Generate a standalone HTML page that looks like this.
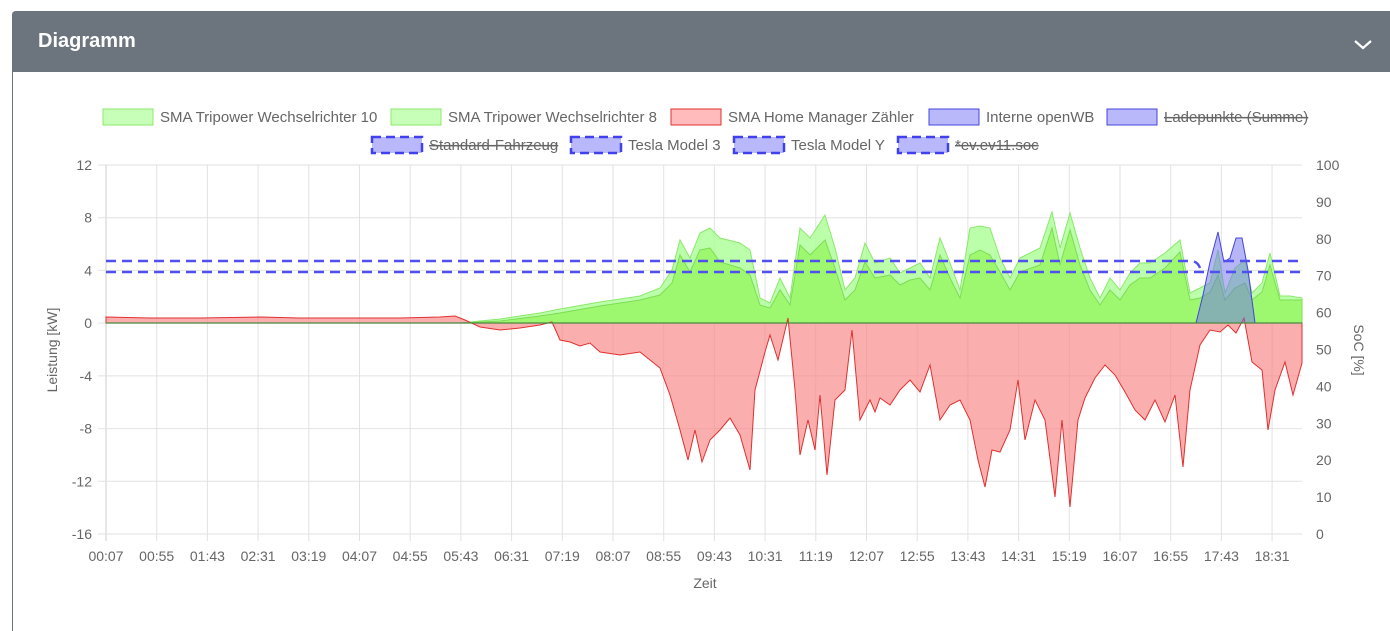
<!DOCTYPE html>
<html><head><meta charset="utf-8">
<style>
body{margin:0;width:1390px;height:612px;background:#fff;overflow:hidden;font-family:"Liberation Sans",sans-serif;}
#panel{position:absolute;left:12px;top:11px;width:1390px;height:620px;border-left:1px solid #6c757d;border-top-left-radius:4px;}
#hdr{position:absolute;left:12px;top:11px;width:1378px;height:61px;background:#6c757d;border-top-left-radius:4px;}
#hdr .t{position:absolute;left:26px;top:19px;color:#fff;font-weight:bold;font-size:20px;}
svg{position:absolute;left:0;top:0}
</style></head><body>
<div id="panel"></div>
<div id="hdr"><div class="t">Diagramm</div>
<svg style="left:1340px;top:22px" width="24" height="24"><path d="M3 8 L11 15 L19 8" fill="none" stroke="#fff" stroke-width="2.2"/></svg>
</div>
<svg id="c" width="1390" height="612" style="top:0;left:0" font-family="Liberation Sans, sans-serif">
<g id="grid"></g>
<path fill="rgba(170,255,150,0.8)" stroke="#8be86a" stroke-width="1" d="M460 323 L500 319 L540 313 L560 309 L600 302 L640 296 L660 288 L672 270 L680 240 L690 258 L700 233 L710 228 L720 238 L740 243 L750 250 L760 298 L770 303 L780 278 L790 298 L800 228 L810 238 L825 215 L835 248 L845 290 L855 278 L865 243 L875 263 L890 258 L900 273 L910 268 L920 263 L930 278 L940 238 L950 263 L960 290 L970 228 L980 226 L990 228 L1000 258 L1010 278 L1020 258 L1040 248 L1052 212 L1060 248 L1070 213 L1080 248 L1090 278 L1100 298 L1110 278 L1120 290 L1130 273 L1140 263 L1150 263 L1165 253 L1180 240 L1190 293 L1200 288 L1210 283 L1218 250 L1225 293 L1235 268 L1245 260 L1252 293 L1262 283 L1270 253 L1280 296 L1290 296 L1302 298 L1302 323 Z"/>
<path fill="#9ef86f" stroke="#7ddc55" stroke-width="1" d="M460 323 L500 321 L540 316 L560 313 L600 306 L640 300 L660 295 L672 283 L680 255 L690 272 L700 250 L710 248 L720 262 L740 268 L750 275 L760 305 L770 308 L780 290 L790 305 L800 245 L810 255 L825 240 L835 268 L845 300 L855 290 L865 262 L875 278 L890 275 L900 285 L910 280 L920 278 L930 290 L940 255 L950 278 L960 298 L970 255 L980 250 L990 255 L1000 272 L1010 290 L1020 272 L1040 265 L1052 228 L1060 265 L1070 230 L1080 265 L1090 290 L1100 305 L1110 290 L1120 300 L1130 285 L1140 278 L1150 278 L1165 268 L1180 252 L1190 300 L1200 298 L1210 292 L1218 275 L1225 300 L1235 288 L1245 283 L1252 300 L1262 292 L1270 265 L1280 300 L1290 300 L1302 300 L1302 323 Z"/>
<path fill="rgba(250,140,140,0.7)" stroke="#e03030" stroke-width="1" d="M106 317 L150 318 L200 318 L260 317 L300 318 L350 318 L400 318 L440 317 L455 316 L465 320 L480 327 L500 330 L520 328 L540 325 L552 322 L560 340 L570 342 L580 346 L590 343 L600 352 L620 355 L640 352 L660 368 L670 395 L680 430 L688 460 L695 430 L702 462 L710 440 L720 430 L730 418 L740 435 L750 470 L755 390 L765 352 L770 335 L778 360 L788 318 L795 390 L800 455 L808 420 L815 450 L820 395 L827 475 L835 400 L845 390 L852 330 L860 420 L870 400 L875 412 L880 398 L890 405 L900 390 L910 380 L920 392 L930 365 L940 420 L950 405 L960 400 L970 420 L978 460 L985 487 L992 450 L1000 452 L1010 430 L1018 380 L1025 440 L1035 400 L1045 420 L1055 497 L1062 420 L1070 507 L1078 420 L1085 398 L1095 378 L1105 365 L1115 375 L1125 392 L1135 410 L1145 420 L1155 400 L1165 422 L1175 395 L1183 467 L1190 390 L1200 345 L1210 330 L1220 332 L1228 325 L1236 333 L1244 318 L1252 362 L1262 370 L1268 430 L1275 390 L1285 362 L1293 395 L1302 363 L1302 323 L106 323 Z"/>
<path fill="rgba(110,110,240,0.5)" stroke="#4444dd" stroke-width="1" d="M1196 323 L1203 295 L1210 262 L1218 232 L1224 262 L1230 258 L1236 238 L1242 238 L1248 270 L1255 323 Z"/>
<line x1="106" y1="323" x2="1302" y2="323" stroke="#4a8a40" stroke-width="1.2"/>
<path d="M106 261 L1192 261 Q1198 262 1200 268 M1224 261 L1302 261" fill="none" stroke="#5050ee" stroke-width="2.5" stroke-dasharray="10,6"/>
<path d="M106 272 L1302 272" fill="none" stroke="#5050ee" stroke-width="2.5" stroke-dasharray="10,6"/>
<g id="lab" fill="#666" font-size="14"></g>
<g font-size="15" fill="#666">
<rect x="103" y="109" width="50" height="16" fill="#c8ffb8" stroke="#8be86a"/><text x="160" y="122">SMA Tripower Wechselrichter 10</text>
<rect x="391" y="109" width="50" height="16" fill="#c8ffb8" stroke="#8be86a"/><text x="448" y="122">SMA Tripower Wechselrichter 8</text>
<rect x="671" y="109" width="50" height="16" fill="#fbb" stroke="#e03030"/><text x="728" y="122">SMA Home Manager Zähler</text>
<rect x="929" y="109" width="50" height="16" fill="#b8b8fb" stroke="#4444dd"/><text x="986" y="122">Interne openWB</text>
<rect x="1107" y="109" width="50" height="16" fill="#b8b8fb" stroke="#4444dd"/><text x="1164" y="122" text-decoration="line-through">Ladepunkte (Summe)</text>
<rect x="372" y="137" width="50" height="16" fill="#b8b8fb" stroke="#4040ee" stroke-width="2.5" stroke-dasharray="9,5"/><text x="429" y="150" text-decoration="line-through">Standard-Fahrzeug</text>
<rect x="571" y="137" width="50" height="16" fill="#b8b8fb" stroke="#4040ee" stroke-width="2.5" stroke-dasharray="9,5"/><text x="628" y="150">Tesla Model 3</text>
<rect x="734" y="137" width="50" height="16" fill="#b8b8fb" stroke="#4040ee" stroke-width="2.5" stroke-dasharray="9,5"/><text x="791" y="150">Tesla Model Y</text>
<rect x="898" y="137" width="50" height="16" fill="#b8b8fb" stroke="#4040ee" stroke-width="2.5" stroke-dasharray="9,5"/><text x="955" y="150" text-decoration="line-through">*ev.ev11.soc</text>
</g>
<text x="705" y="588" font-size="14" fill="#666" text-anchor="middle">Zeit</text>
<text transform="translate(57,350) rotate(-90)" font-size="14" fill="#666" text-anchor="middle">Leistung [kW]</text>
<text transform="translate(1354,350) rotate(90)" font-size="14" fill="#666" text-anchor="middle">SoC [%]</text>
</svg>
<script>
var ns="http://www.w3.org/2000/svg",g=document.getElementById('grid'),L=document.getElementById('lab');
function el(p,t,a,txt){var e=document.createElementNS(ns,t);for(var k in a)e.setAttribute(k,a[k]);if(txt)e.textContent=txt;p.appendChild(e);}
var times="00:07 00:55 01:43 02:31 03:19 04:07 04:55 05:43 06:31 07:19 08:07 08:55 09:43 10:31 11:19 12:07 12:55 13:43 14:31 15:19 16:07 16:55 17:43 18:31".split(" ");
for(var i=0;i<24;i++){var x=106+i*50.7;el(g,'line',{x1:x,y1:165,x2:x,y2:541,stroke:i?'#e2e2e2':'#ccc'});el(L,'text',{x:x,y:561,'text-anchor':'middle'},times[i]);}
for(var j=0;j<=7;j++){var y=165+j*52.714;el(g,'line',{x1:98,y1:y,x2:1302,y2:y,stroke:'#e2e2e2'});el(L,'text',{x:92,y:y+5,'text-anchor':'end'},String(12-4*j));}
for(var k=0;k<=10;k++){var y2=165+k*36.9;el(L,'text',{x:1316,y:y2+5},String(100-10*k));}
</script>
</body></html>
